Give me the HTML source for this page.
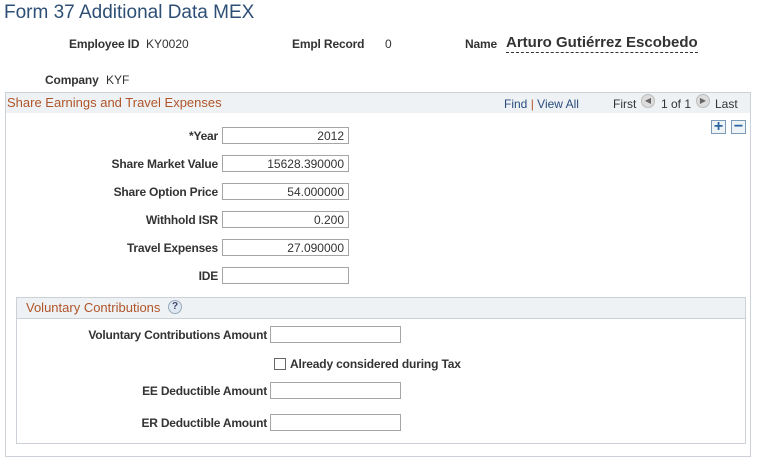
<!DOCTYPE html>
<html><head><style>
body{margin:0;width:759px;height:462px;background:#fff;font-family:"Liberation Sans",Arial,sans-serif;font-size:12px;color:#333;position:relative;overflow:hidden}
.a{position:absolute;white-space:nowrap}
.b{font-weight:bold;letter-spacing:-0.15px}
.inp{position:absolute;height:17px;border:1px solid #a5a5a5;background:#fff;box-sizing:border-box;text-align:right;padding-right:4px;line-height:16px;font-size:12px}
.lab{position:absolute;font-weight:bold;text-align:right;white-space:nowrap;letter-spacing:-0.2px}
a{color:#2a4d80;text-decoration:none}
</style></head><body>
<div class="a" style="left:4px;top:0;font-size:19px;color:#2e4f75;line-height:26px">Form 37 Additional Data MEX</div>
<div class="a b" style="left:69px;top:37px">Employee ID</div>
<div class="a" style="left:146px;top:37px">KY0020</div>
<div class="a b" style="left:292px;top:37px">Empl Record</div>
<div class="a" style="left:385px;top:37px">0</div>
<div class="a b" style="left:465px;top:37px">Name</div>
<div class="a" style="left:506px;top:34px;font-size:15px;font-weight:bold;border-bottom:1px dashed #333;padding-bottom:1px">Arturo Gutiérrez Escobedo</div>
<div class="a b" style="left:45px;top:73px">Company</div>
<div class="a" style="left:106px;top:73px">KYF</div>

<div class="a" style="left:5px;top:92px;width:746px;height:365px;border:1px solid #cbd1d6;box-sizing:border-box"></div>
<div class="a" style="left:6px;top:93px;width:744px;height:20px;background:#eef2f4"></div>
<div class="a" style="left:7px;top:95px;color:#b0552a;font-size:13px">Share Earnings and Travel Expenses</div>
<div class="a" style="left:504px;top:97px"><a>Find</a> <span style="color:#b0552a">|</span> <a>View All</a></div>
<div class="a" style="left:613px;top:97px;color:#333">First</div>
<div class="a" style="left:641px;top:94px;width:14px;height:14px;border-radius:50%;background:#ddd;border:1px solid #bbb;box-sizing:border-box;font-size:8px;line-height:12px;text-align:center;color:#666">◀</div>
<div class="a" style="left:661px;top:97px">1 of 1</div>
<div class="a" style="left:696px;top:94px;width:14px;height:14px;border-radius:50%;background:#ddd;border:1px solid #bbb;box-sizing:border-box;font-size:8px;line-height:12px;text-align:center;color:#666">▶</div>
<div class="a" style="left:715px;top:97px">Last</div>
<div class="a" style="left:711px;top:120px;width:15px;height:14px;border:1px solid #7a9ab8;background:#eef3f8;box-sizing:border-box;color:#2a64a0;font-weight:bold;font-size:16px;line-height:11px;text-align:center">+</div>
<div class="a" style="left:731px;top:120px;width:15px;height:14px;border:1px solid #7a9ab8;background:#eef3f8;box-sizing:border-box;color:#2a64a0;font-weight:bold;font-size:16px;line-height:11px;text-align:center">−</div>

<div class="lab" style="right:541px;top:129px">*Year</div><div class="inp" style="left:222px;top:127px;width:127px">2012</div>
<div class="lab" style="right:541px;top:157px">Share Market Value</div><div class="inp" style="left:222px;top:155px;width:127px">15628.390000</div>
<div class="lab" style="right:541px;top:185px">Share Option Price</div><div class="inp" style="left:222px;top:183px;width:127px">54.000000</div>
<div class="lab" style="right:541px;top:213px">Withhold ISR</div><div class="inp" style="left:222px;top:211px;width:127px">0.200</div>
<div class="lab" style="right:541px;top:241px">Travel Expenses</div><div class="inp" style="left:222px;top:239px;width:127px">27.090000</div>
<div class="lab" style="right:541px;top:269px">IDE</div><div class="inp" style="left:222px;top:267px;width:127px"></div>

<div class="a" style="left:16px;top:297px;width:730px;height:147px;border:1px solid #cbd1d6;box-sizing:border-box"></div>
<div class="a" style="left:17px;top:298px;width:728px;height:20px;background:#eef2f4;border-bottom:1px solid #cbd1d6"></div>
<div class="a" style="left:26px;top:300px;color:#b0552a;font-size:13px">Voluntary Contributions</div>
<div class="a" style="left:168px;top:300px;width:14px;height:14px;border-radius:50%;background:#dfe9f3;border:1px solid #9ab;box-sizing:border-box;font-size:10px;line-height:12px;text-align:center;color:#446;font-weight:bold">?</div>
<div class="lab" style="right:492px;top:328px">Voluntary Contributions Amount</div><div class="inp" style="left:270px;top:326px;width:131px"></div>
<div class="a" style="left:274px;top:358px;width:12px;height:12px;border:1px solid #666;box-sizing:border-box;background:#fff"></div>
<div class="a b" style="left:290px;top:357px">Already considered during Tax</div>
<div class="lab" style="right:492px;top:384px">EE Deductible Amount</div><div class="inp" style="left:270px;top:382px;width:131px"></div>
<div class="lab" style="right:492px;top:416px">ER Deductible Amount</div><div class="inp" style="left:270px;top:414px;width:131px"></div>
</body></html>
